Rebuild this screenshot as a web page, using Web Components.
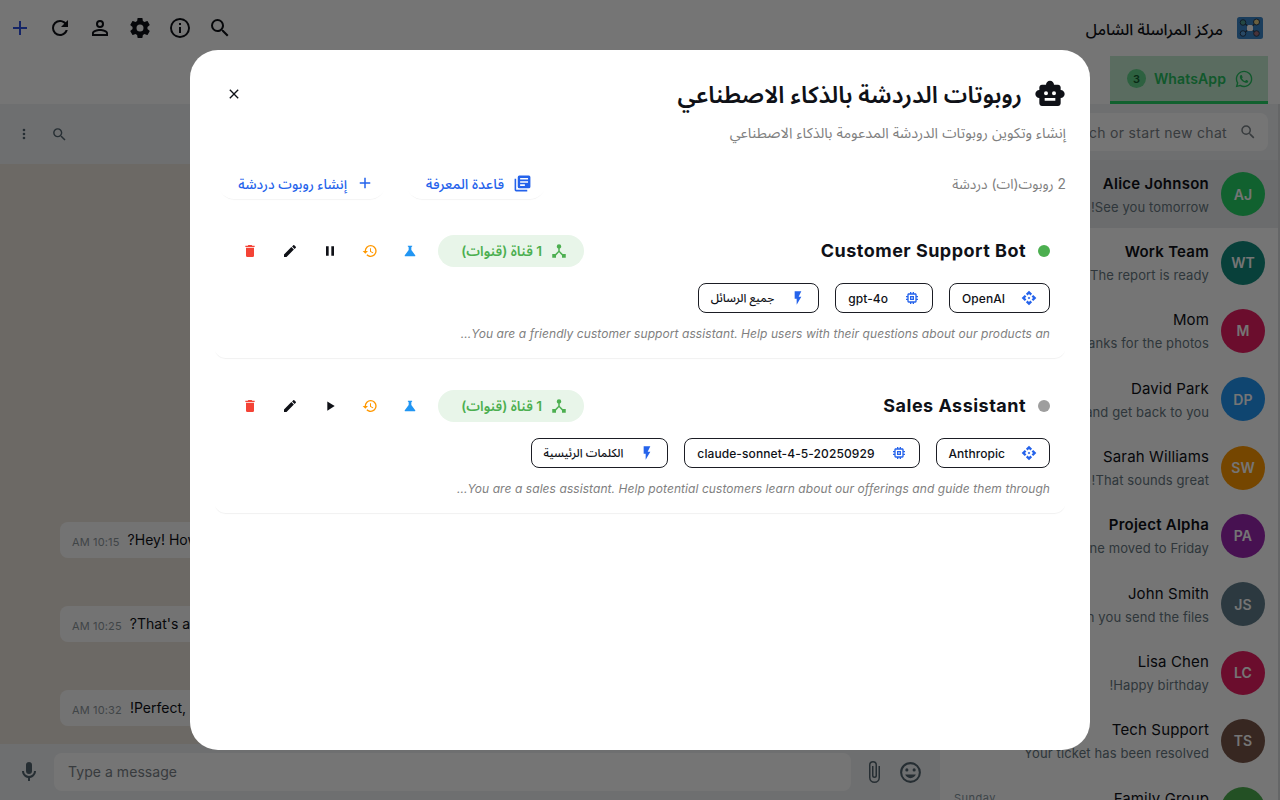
<!DOCTYPE html>
<html lang="ar" dir="rtl">
<head>
<meta charset="utf-8">
<title>مركز المراسلة الشامل</title>
<style>
  body {
    margin: 0;
    overflow: hidden;
    font-family: Inter, "Noto Sans Arabic", "Noto Sans", "DejaVu Sans", sans-serif;
    color: #0f1117;
  }
</style>
</head>
<body>
<messenger-app></messenger-app>
<bots-dialog></bots-dialog>

<script>
const ICONS = {
  plus: 'M19,13H13V19H11V13H5V11H11V5H13V11H19V13Z',
  refresh: 'M17.65,6.35C16.2,4.9 14.21,4 12,4A8,8 0 0,0 4,12A8,8 0 0,0 12,20C15.73,20 18.84,17.45 19.73,14H17.65C16.83,16.33 14.61,18 12,18A6,6 0 0,1 6,12A6,6 0 0,1 12,6C13.66,6 15.14,6.69 16.22,7.78L13,11H20V4L17.65,6.35Z',
  account: 'M12,4A4,4 0 0,1 16,8A4,4 0 0,1 12,12A4,4 0 0,1 8,8A4,4 0 0,1 12,4M12,6A2,2 0 0,0 10,8A2,2 0 0,0 12,10A2,2 0 0,0 14,8A2,2 0 0,0 12,6M12,13C14.67,13 20,14.33 20,17V20H4V17C4,14.33 9.33,13 12,13M12,14.9C9.03,14.9 5.9,16.36 5.9,17V18.1H18.1V17C18.1,16.36 14.97,14.9 12,14.9Z',
  cog: 'M12,15.5A3.5,3.5 0 0,1 8.5,12A3.5,3.5 0 0,1 12,8.5A3.5,3.5 0 0,1 15.5,12A3.5,3.5 0 0,1 12,15.5M19.43,12.97C19.47,12.65 19.5,12.33 19.5,12C19.5,11.67 19.47,11.34 19.43,11L21.54,9.37C21.73,9.22 21.78,8.95 21.66,8.73L19.66,5.27C19.54,5.05 19.27,4.96 19.05,5.05L16.56,6.05C16.04,5.66 15.5,5.32 14.87,5.07L14.5,2.42C14.46,2.18 14.25,2 14,2H10C9.75,2 9.54,2.18 9.5,2.42L9.13,5.07C8.5,5.32 7.96,5.66 7.44,6.05L4.95,5.05C4.73,4.96 4.46,5.05 4.34,5.27L2.34,8.73C2.21,8.95 2.27,9.22 2.46,9.37L4.57,11C4.53,11.34 4.5,11.67 4.5,12C4.5,12.33 4.53,12.65 4.57,12.97L2.46,14.63C2.27,14.78 2.21,15.05 2.34,15.27L4.34,18.73C4.46,18.95 4.73,19.03 4.95,18.95L7.44,17.94C7.96,18.34 8.5,18.68 9.13,18.93L9.5,21.58C9.54,21.82 9.75,22 10,22H14C14.25,22 14.46,21.82 14.5,21.58L14.87,18.93C15.5,18.67 16.04,18.34 16.56,17.94L19.05,18.95C19.27,19.03 19.54,18.95 19.66,18.73L21.66,15.27C21.78,15.05 21.73,14.78 21.54,14.63L19.43,12.97Z',
  info: 'M11,9H13V7H11M12,20C7.59,20 4,16.41 4,12C4,7.59 7.59,4 12,4C16.41,4 20,7.59 20,12C20,16.41 16.41,20 12,20M12,2A10,10 0 0,0 2,12A10,10 0 0,0 12,22A10,10 0 0,0 22,12A10,10 0 0,0 12,2M11,17H13V11H11V17Z',
  search: 'M9.5,3A6.5,6.5 0 0,1 16,9.5C16,11.11 15.41,12.59 14.44,13.73L14.71,14H15.5L20.5,19L19,20.5L14,15.5V14.71L13.73,14.44C12.59,15.41 11.11,16 9.5,16A6.5,6.5 0 0,1 3,9.5A6.5,6.5 0 0,1 9.5,3M9.5,5C7,5 5,7 5,9.5C5,12 7,14 9.5,14C12,14 14,12 14,9.5C14,7 12,5 9.5,5Z',
  dots: 'M12,16A2,2 0 0,1 14,18A2,2 0 0,1 12,20A2,2 0 0,1 10,18A2,2 0 0,1 12,16M12,10A2,2 0 0,1 14,12A2,2 0 0,1 12,14A2,2 0 0,1 10,12A2,2 0 0,1 12,10M12,4A2,2 0 0,1 14,6A2,2 0 0,1 12,8A2,2 0 0,1 10,6A2,2 0 0,1 12,4Z',
  close: 'M19,6.41L17.59,5L12,10.59L6.41,5L5,6.41L10.59,12L5,17.59L6.41,19L12,13.41L17.59,19L19,17.59L13.41,12L19,6.41Z',
  whatsapp: 'M12.04 2C6.58 2 2.13 6.45 2.13 11.91C2.13 13.66 2.59 15.36 3.45 16.86L2.05 22L7.3 20.62C8.75 21.41 10.38 21.83 12.04 21.83C17.5 21.83 21.95 17.38 21.95 11.92C21.95 9.27 20.92 6.78 19.05 4.91C17.18 3.03 14.69 2 12.04 2M12.05 3.67C14.25 3.67 16.31 4.53 17.87 6.09C19.42 7.65 20.28 9.72 20.28 11.92C20.28 16.46 16.58 20.15 12.04 20.15C10.56 20.15 9.11 19.76 7.85 19L7.55 18.83L4.43 19.65L5.26 16.61L5.06 16.29C4.24 15 3.8 13.47 3.8 11.91C3.81 7.37 7.5 3.67 12.05 3.67M8.53 7.33C8.37 7.33 8.1 7.39 7.87 7.64C7.65 7.89 7 8.5 7 9.71C7 10.93 7.89 12.1 8 12.27C8.14 12.44 9.76 14.94 12.25 16C12.84 16.27 13.3 16.42 13.66 16.53C14.25 16.72 14.79 16.69 15.22 16.63C15.7 16.56 16.68 16.03 16.89 15.45C17.1 14.87 17.1 14.38 17.04 14.27C16.97 14.17 16.81 14.11 16.56 14C16.31 13.86 15.09 13.26 14.87 13.18C14.64 13.1 14.5 13.06 14.31 13.3C14.15 13.55 13.67 14.11 13.53 14.27C13.38 14.44 13.24 14.46 13 14.34C12.74 14.21 11.94 13.95 11 13.11C10.26 12.45 9.77 11.64 9.62 11.39C9.5 11.15 9.61 11 9.73 10.89C9.84 10.78 10 10.6 10.1 10.45C10.23 10.31 10.27 10.2 10.35 10.04C10.43 9.87 10.39 9.73 10.33 9.61C10.27 9.5 9.77 8.26 9.56 7.77C9.36 7.29 9.16 7.35 9 7.34C8.86 7.34 8.7 7.33 8.53 7.33Z',
  robot: 'M20 9V7c0-1.1-.9-2-2-2h-3c0-1.66-1.34-3-3-3S9 3.34 9 5H6c-1.1 0-2 .9-2 2v2c-1.66 0-3 1.34-3 3s1.34 3 3 3v4c0 1.1.9 2 2 2h12c1.1 0 2-.9 2-2v-4c1.66 0 3-1.34 3-3s-1.34-3-3-3zM7.5 11.5a1.5 1.5 0 0 1 3 0a1.5 1.5 0 0 1-3 0zM16 17H8v-2h8v2zM15 13a1.5 1.5 0 0 1 0-3a1.5 1.5 0 0 1 0 3z',
  library: 'M4,6H2V20A2,2 0 0,0 4,22H18V20H4V6M20,2H8A2,2 0 0,0 6,4V16A2,2 0 0,0 8,18H20A2,2 0 0,0 22,16V4A2,2 0 0,0 20,2M19,7H9V5H19V7M19,11H9V9H19V11M15,15H9V13H15V15Z',
  trash: 'M19,4H15.5L14.5,3H9.5L8.5,4H5V6H19M6,19A2,2 0 0,0 8,21H16A2,2 0 0,0 18,19V7H6V19Z',
  pencil: 'M20.71,7.04C21.1,6.65 21.1,6 20.71,5.63L18.37,3.29C18,2.9 17.35,2.9 16.96,3.29L15.12,5.12L18.87,8.87M3,17.25V21H6.75L17.81,9.93L14.06,6.18L3,17.25Z',
  pause: 'M14,19H18V5H14M6,19H10V5H6V19Z',
  play: 'M8,5.14V19.14L19,12.14L8,5.14Z',
  history: 'M13.5,8H12V13L16.28,15.54L17,14.33L13.5,12.25V8M13,3A9,9 0 0,0 4,12H1L4.96,16.03L9,12H6A7,7 0 0,1 13,5A7,7 0 0,1 20,12A7,7 0 0,1 13,19C11.07,19 9.32,18.21 8.06,16.94L6.64,18.36C8.27,20 10.5,21 13,21A9,9 0 0,0 22,12A9,9 0 0,0 13,3Z',
  flask: 'M19.8 18.4L14 10.67V6.5l1.35-1.69c.26-.33.03-.81-.39-.81H9.04c-.42 0-.65.48-.39.81L10 6.5v4.17L4.2 18.4c-.49.66-.02 1.6.8 1.6h14c.82 0 1.29-.94.8-1.6z',
  hub: 'M17,16L13,12V8.82C14.16,8.4 15,7.3 15,6A3,3 0 0,0 12,3A3,3 0 0,0 9,6C9,7.3 9.84,8.4 11,8.82V12L7,16H3V21H8V17.95L12,13.75L16,17.95V21H21V16H17Z',
  api: 'M14,12L12,14L10,12L12,10L14,12M12,6L14.12,8.12L16.62,5.62L12,1L7.38,5.62L9.88,8.12L12,6M6,12L8.12,9.88L5.62,7.38L1,12L5.62,16.62L8.12,14.12L6,12M18,12L15.88,14.12L18.38,16.62L23,12L18.38,7.38L15.88,9.88L18,12M12,18L9.88,15.88L7.38,18.38L12,23L16.62,18.38L14.12,15.88L12,18Z',
  chip: 'M17,17H7V7H17M21,11V9H19V7C19,5.89 18.1,5 17,5H15V3H13V5H11V3H9V5H7C5.89,5 5,5.89 5,7V9H3V11H5V13H3V15H5V17A2,2 0 0,0 7,19H9V21H11V19H13V21H15V19H17A2,2 0 0,0 19,17V15H21V13H19V11M13,13H11V11H13M15,9H9V15H15V9Z',
  flash: 'M7,2V13H10V22L17,10H13L17,2H7Z',
  mic: 'M12,2A3,3 0 0,1 15,5V11A3,3 0 0,1 12,14A3,3 0 0,1 9,11V5A3,3 0 0,1 12,2M19,11C19,14.53 16.39,17.44 13,17.93V21H11V17.93C7.61,17.44 5,14.53 5,11H7A5,5 0 0,0 12,16A5,5 0 0,0 17,11H19Z',
  attach: 'M16.5,6V17.5A4,4 0 0,1 12.5,21.5A4,4 0 0,1 8.5,17.5V5A2.5,2.5 0 0,1 11,2.5A2.5,2.5 0 0,1 13.5,5V15.5A1,1 0 0,1 12.5,16.5A1,1 0 0,1 11.5,15.5V6H10V15.5A2.5,2.5 0 0,0 12.5,18A2.5,2.5 0 0,0 15,15.5V5A4,4 0 0,0 11,1A4,4 0 0,0 7,5V17.5A5.5,5.5 0 0,0 12.5,23A5.5,5.5 0 0,0 18,17.5V6H16.5Z',
  smile: 'M12,17.5C14.33,17.5 16.3,16.04 17.11,14H6.89C7.69,16.04 9.67,17.5 12,17.5M8.5,11A1.5,1.5 0 0,0 10,9.5A1.5,1.5 0 0,0 8.5,8A1.5,1.5 0 0,0 7,9.5A1.5,1.5 0 0,0 8.5,11M15.5,11A1.5,1.5 0 0,0 17,9.5A1.5,1.5 0 0,0 15.5,8A1.5,1.5 0 0,0 14,9.5A1.5,1.5 0 0,0 15.5,11M12,20A8,8 0 0,1 4,12A8,8 0 0,1 12,4A8,8 0 0,1 20,12A8,8 0 0,1 12,20M12,2C6.47,2 2,6.5 2,12A10,10 0 0,0 12,22A10,10 0 0,0 22,12A10,10 0 0,0 12,2Z',
};

class MdIcon extends HTMLElement {
  connectedCallback() {
    const size = this.getAttribute('size') || 24;
    this.attachShadow({ mode: 'open' }).innerHTML = `
      <style>
        :host { display: inline-flex; flex: none; width: ${size}px; height: ${size}px; }
        svg { width: 100%; height: 100%; fill: currentColor; fill-rule: evenodd; }
      </style>
      <svg viewBox="0 0 24 24"><path d="${ICONS[this.getAttribute('name')]}"/></svg>
    `;
  }
}
customElements.define('md-icon', MdIcon);

class AppLogo extends HTMLElement {
  connectedCallback() {
    this.attachShadow({ mode: 'open' }).innerHTML = `
      <style>
        :host { display: block; width: 26px; height: 22px; }
        svg { display: block; }
      </style>
      <svg width="26" height="22" viewBox="0 0 26 22">
        <rect width="26" height="22" rx="2.5" fill="#3a86c8"/>
        <path d="M6 5L20 17M20 5L6 17" stroke="#263c55" stroke-width="1.5"/>
        <circle cx="6" cy="5.5" r="2.8" fill="#4f9e93" stroke="#263c55"/>
        <circle cx="19.5" cy="5" r="3" fill="#e8d28a" stroke="#263c55"/>
        <circle cx="6" cy="16.5" r="2.8" fill="#5aa0dc" stroke="#263c55"/>
        <circle cx="19.5" cy="16.5" r="2.8" fill="#a0707c" stroke="#263c55"/>
        <rect x="10" y="8" width="6" height="6" rx="1.5" fill="#fff"/>
      </svg>
    `;
  }
}
customElements.define('app-logo', AppLogo);

class ChatRow extends HTMLElement {
  connectedCallback() {
    const bold = this.hasAttribute('unread');
    this.attachShadow({ mode: 'open' }).innerHTML = `
      <style>
        :host {
          display: flex;
          align-items: center;
          gap: 12px;
          height: 68.35px;
          padding: 0 13px 0 14px;
          box-sizing: border-box;
        }
        :host([selected]) { background: #e9ebed; }
        .avatar {
          flex: none;
          width: 44px;
          height: 44px;
          border-radius: 50%;
          display: flex;
          align-items: center;
          justify-content: center;
          background: ${this.getAttribute('color')};
          color: #fff;
          font-size: 14px;
          font-weight: 600;
          letter-spacing: .1px;
        }
        .info { flex: 1; min-width: 0; white-space: nowrap; padding-top: 1px; }
        .name {
          font-size: 15px;
          line-height: 21px;
          font-weight: ${bold ? 600 : 400};
          letter-spacing: ${bold ? .25 : .14}px;
        }
        .bottom {
          display: flex;
          justify-content: space-between;
          align-items: flex-end;
          min-height: 20px;
          margin-top: 3px;
          font-size: 13px;
          line-height: 20px;
          letter-spacing: .11px;
          color: #667781;
        }
        .top { display: flex; justify-content: space-between; height: 21px; }
        .time { font-size: 11px; line-height: 20px; color: #8696a0; letter-spacing: .5px; }
      </style>
      <div class="avatar">${this.getAttribute('initials')}</div>
      <div class="info">
        <div class="top"><span class="name">${this.getAttribute('name')}</span><span class="time">${this.getAttribute('time') || ''}</span></div>
        <div class="bottom"><span><slot></slot></span></div>
      </div>
    `;
  }
}
customElements.define('chat-row', ChatRow);

class MessageBubble extends HTMLElement {
  connectedCallback() {
    this.attachShadow({ mode: 'open' }).innerHTML = `
      <style>
        :host {
          display: flex;
          align-items: center;
          gap: 8px;
          width: max-content;
          height: 36px;
          box-sizing: border-box;
          padding: 0 12px 1px;
          border-radius: 8px;
          background: #fbfbfb;
          font-size: 14px;
          white-space: nowrap;
        }
        .time { font-size: 11px; letter-spacing: .15px; color: #8d969c; padding-top: 4px; }
      </style>
      <span><slot></slot></span>
      <span class="time">${this.getAttribute('time')}</span>
    `;
  }
}
customElements.define('message-bubble', MessageBubble);

class MessengerApp extends HTMLElement {
  connectedCallback() {
    this.attachShadow({ mode: 'open' }).innerHTML = `
      <style>
        :host { display: flex; flex-direction: column; height: 800px; background: #fff; }
        header { display: flex; align-items: center; height: 56px; padding: 0 17px 0 8px; box-sizing: border-box; flex: none; }
        header h1 { flex: 1; margin: 0 14px 0 0; font-size: 15.8px; font-weight: 500; padding-top: 3px; }
        .tools { display: flex; gap: 16px; flex-direction: row-reverse; }
        .tools .add { color: #2f52e0; }
        .tabs { display: flex; height: 48px; padding-right: 12px; flex: none; }
        .tab {
          display: flex;
          align-items: center;
          width: 158px;
          height: 48px;
          box-sizing: border-box;
          padding-right: 14px;
          border-bottom: 3px solid #25d366;
          background: #c4ecd1;
          color: #25c060;
          font-size: 14px;
          font-weight: 600;
          letter-spacing: .12px;
          gap: 8px;
        }
        .badge {
          width: 19px;
          height: 19px;
          border-radius: 50%;
          background: #62d38b;
          color: #145c30;
          font-size: 11px;
          display: flex;
          align-items: center;
          justify-content: center;
          letter-spacing: 0;
        }
        .body { display: flex; flex: 1; min-height: 0; }
        aside { width: 340px; box-sizing: border-box; overflow: hidden; border-right: 2px solid #dcdfe1; }
        .search { height: 56px; padding: 9px 10px 9px 12px; box-sizing: border-box; background: #f0f2f5; }
        .box {
          display: flex;
          align-items: center;
          gap: 12px;
          height: 38px;
          padding: 0 11px;
          background: #fff;
          border-radius: 8px;
          color: #7a8288;
          font-size: 14px;
          letter-spacing: .3px;
        }
        main { flex: 1; display: flex; flex-direction: column; min-width: 0; }
        .chat-head {
          height: 60px;
          flex: none;
          display: flex;
          align-items: center;
          justify-content: flex-end;
          gap: 19px;
          padding-left: 16px;
          background: #eff2f5;
          color: #54656f;
        }
        .messages {
          flex: 1;
          display: flex;
          flex-direction: column;
          justify-content: flex-end;
          align-items: flex-end;
          gap: 48px;
          padding: 0 60px 18px;
          background: #ece5dd;
        }
        .composer {
          height: 56px;
          flex: none;
          display: flex;
          align-items: center;
          padding: 0 17px;
          box-sizing: border-box;
          background: #f0f2f5;
          color: #54656f;
        }
        .input {
          flex: 1;
          margin: 0 11px 0 13px;
          height: 38px;
          line-height: 38px;
          padding: 0 14px;
          border-radius: 8px;
          background: #fff;
          direction: ltr;
          font-size: 14px;
          letter-spacing: .05px;
          color: #7a8288;
        }
        .composer .attach { margin-right: 12px; }
      </style>
      <header>
        <app-logo></app-logo>
        <h1>مركز المراسلة الشامل</h1>
        <div class="tools">
          <md-icon class="add" name="plus"></md-icon>
          <md-icon name="refresh"></md-icon>
          <md-icon name="account"></md-icon>
          <md-icon name="cog"></md-icon>
          <md-icon name="info"></md-icon>
          <md-icon name="search"></md-icon>
        </div>
      </header>
      <div class="tabs">
        <div class="tab">
          <md-icon name="whatsapp" size="20"></md-icon>
          <span>WhatsApp</span>
          <span class="badge">3</span>
        </div>
      </div>
      <div class="body">
        <aside>
          <div class="search">
            <div class="box"><md-icon name="search" size="18"></md-icon><span>Search or start new chat</span></div>
          </div>
          <chat-row initials="AJ" name="Alice Johnson" color="#25d366" selected unread>See you tomorrow!</chat-row>
          <chat-row initials="WT" name="Work Team" color="#128c7e" unread>The report is ready</chat-row>
          <chat-row initials="M" name="Mom" color="#e91e63">Thanks for the photos</chat-row>
          <chat-row initials="DP" name="David Park" color="#2196f3">I'll check and get back to you</chat-row>
          <chat-row initials="SW" name="Sarah Williams" color="#ff9800">That sounds great!</chat-row>
          <chat-row initials="PA" name="Project Alpha" color="#9c27b0" unread>Deadline moved to Friday</chat-row>
          <chat-row initials="JS" name="John Smith" color="#607d8b">Can you send the files?</chat-row>
          <chat-row initials="LC" name="Lisa Chen" color="#e91e63">Happy birthday!</chat-row>
          <chat-row initials="TS" name="Tech Support" color="#795548">Your ticket has been resolved</chat-row>
          <chat-row initials="FG" name="Family Group" color="#4caf50" time="Sunday"></chat-row>
        </aside>
        <main>
          <div class="chat-head">
            <md-icon name="search" size="17"></md-icon>
            <md-icon name="dots" size="16"></md-icon>
          </div>
          <div class="messages">
            <message-bubble time="10:15 AM">Hey! How are you doing?</message-bubble>
            <message-bubble time="10:25 AM">That's awesome! Shall we meet?</message-bubble>
            <message-bubble time="10:32 AM">Perfect, see you tomorrow!</message-bubble>
          </div>
          <div class="composer">
            <md-icon name="smile" size="25"></md-icon>
            <md-icon class="attach" name="attach"></md-icon>
            <div class="input">Type a message</div>
            <md-icon name="mic"></md-icon>
          </div>
        </main>
      </div>
    `;
  }
}
customElements.define('messenger-app', MessengerApp);

class BotChip extends HTMLElement {
  connectedCallback() {
    this.attachShadow({ mode: 'open' }).innerHTML = `
      <style>
        :host {
          display: inline-flex;
          align-items: center;
          gap: 16px;
          height: 30px;
          box-sizing: border-box;
          padding: 0 12px;
          border: 1px solid #1b1d24;
          border-radius: 8px;
          font-size: 12px;
          font-weight: 500;
          letter-spacing: .04px;
          white-space: nowrap;
        }
        :host([icon="chip"]) { letter-spacing: .09px; }
        :host([icon="flash"]) { font-size: 11.65px; }
        md-icon { color: #2563eb; }
      </style>
      <md-icon name="${this.getAttribute('icon')}" size="16"></md-icon>
      <span><slot></slot></span>
    `;
  }
}
customElements.define('bot-chip', BotChip);

class BotCard extends HTMLElement {
  connectedCallback() {
    const active = this.hasAttribute('active');
    this.attachShadow({ mode: 'open' }).innerHTML = `
      <style>
        :host {
          display: block;
          height: 139px;
          box-sizing: border-box;
          padding: 16px 16px 0;
          border-radius: 12px;
          box-shadow: 0 2px 1px -1.5px rgba(0, 0, 0, .06);
        }
        .head { display: flex; align-items: center; height: 32px; }
        .dot { width: 12px; height: 12px; border-radius: 50%; background: ${active ? '#4caf50' : '#9e9e9e'}; }
        h3 { flex: 1; margin: 0 12px 2px 0; font-size: 18px; font-weight: 650; letter-spacing: .48px; }
        .channels {
          display: flex;
          align-items: center;
          gap: 8px;
          height: 32px;
          width: 146px;
          box-sizing: border-box;
          padding-right: 16px;
          border-radius: 16px;
          background: #e8f5e9;
          color: #4caf50;
          font-size: 13.7px;
          font-weight: 600;
          white-space: nowrap;
        }
        .actions { display: flex; gap: 24px; margin-right: 20px; padding-left: 12px; }
        .chips { display: flex; gap: 16px; margin-top: 16px; }
        p {
          margin: 12px 0 0;
          font-size: 12px;
          line-height: 18px;
          font-style: italic;
          letter-spacing: .07px;
          color: #808080;
          white-space: nowrap;
        }
      </style>
      <div class="head">
        <span class="dot"></span>
        <h3>${this.getAttribute('name')}</h3>
        <div class="channels"><md-icon name="hub" size="18"></md-icon><span>1 قناة (قنوات)</span></div>
        <div class="actions">
          <md-icon name="flask" size="16" style="color:#2196f3"></md-icon>
          <md-icon name="history" size="16" style="color:#ff9800"></md-icon>
          <md-icon name="${active ? 'pause' : 'play'}" size="16"></md-icon>
          <md-icon name="pencil" size="16"></md-icon>
          <md-icon name="trash" size="16" style="color:#f44336"></md-icon>
        </div>
      </div>
      <div class="chips"><slot name="chips"></slot></div>
      <p><slot></slot></p>
    `;
  }
}
customElements.define('bot-card', BotCard);

class BotsDialog extends HTMLElement {
  connectedCallback() {
    this.attachShadow({ mode: 'open' }).innerHTML = `
      <style>
        :host {
          position: fixed;
          inset: 0;
          display: flex;
          align-items: center;
          justify-content: center;
          background: rgba(0, 0, 0, .54);
        }
        .panel {
          width: 900px;
          height: 700px;
          box-sizing: border-box;
          padding: 24px;
          border-radius: 28px;
          background: #fff;
        }
        .title { display: flex; align-items: center; height: 40px; gap: 12px; }
        h2 { flex: 1; margin: 0; padding-top: 2px; font-size: 23.5px; font-weight: 600; }
        .close { margin-left: 12px; }
        .sub { margin: 9px 0 0; font-size: 14.55px; line-height: 20px; color: #808080; }
        .bar { display: flex; align-items: center; height: 32px; margin: 24px 0 20px; }
        .count { flex: 1; padding-top: 2px; font-size: 13.8px; color: #808080; }
        .btn {
          display: flex;
          align-items: center;
          box-sizing: border-box;
          height: 32px;
          gap: 9px;
          border-radius: 16px;
          box-shadow: 0 2px 1px -1.5px rgba(0, 0, 0, .08);
          color: #2563eb;
          font-weight: 500;
          white-space: nowrap;
        }
        .btn span { padding-top: 2px; }
        .kb { width: 140px; margin-left: 20px; padding-right: 14px; font-size: 14.2px; }
        .new { width: 168px; margin-left: 4px; padding-right: 12px; font-size: 13.65px; }
        bot-card + bot-card { margin-top: 16px; }
      </style>
      <div class="panel">
        <div class="title">
          <md-icon name="robot" size="32"></md-icon>
          <h2>روبوتات الدردشة بالذكاء الاصطناعي</h2>
          <md-icon class="close" name="close" size="16"></md-icon>
        </div>
        <p class="sub">إنشاء وتكوين روبوتات الدردشة المدعومة بالذكاء الاصطناعي</p>
        <div class="bar">
          <span class="count">2 روبوت(ات) دردشة</span>
          <div class="btn kb"><md-icon name="library" size="19"></md-icon><span>قاعدة المعرفة</span></div>
          <div class="btn new"><md-icon name="plus" size="18"></md-icon><span>إنشاء روبوت دردشة</span></div>
        </div>
        <bot-card name="Customer Support Bot" active>
          <bot-chip slot="chips" icon="api">OpenAI</bot-chip>
          <bot-chip slot="chips" icon="chip">gpt-4o</bot-chip>
          <bot-chip slot="chips" icon="flash">جميع الرسائل</bot-chip>
          You are a friendly customer support assistant. Help users with their questions about our products an...
        </bot-card>
        <bot-card name="Sales Assistant">
          <bot-chip slot="chips" icon="api">Anthropic</bot-chip>
          <bot-chip slot="chips" icon="chip">claude-sonnet-4-5-20250929</bot-chip>
          <bot-chip slot="chips" icon="flash">الكلمات الرئيسية</bot-chip>
          You are a sales assistant. Help potential customers learn about our offerings and guide them through...
        </bot-card>
      </div>
    `;
  }
}
customElements.define('bots-dialog', BotsDialog);
</script>
</body>
</html>
